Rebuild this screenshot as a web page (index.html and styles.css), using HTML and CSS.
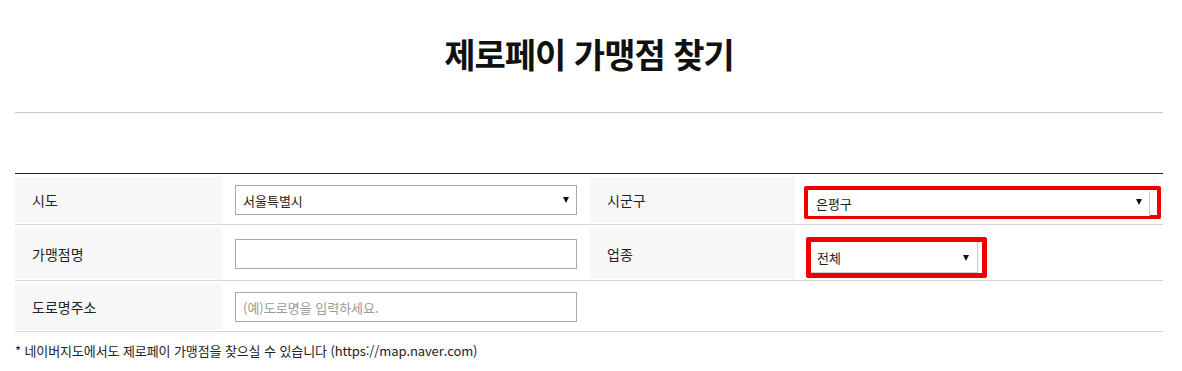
FILE: index.html
```html
<!DOCTYPE html>
<html lang="ko">
<head>
  <meta charset="UTF-8">
  <meta name="viewport" content="width=device-width, initial-scale=1.0">
  <title>제로페이 가맹점 찾기</title>
  <link rel="stylesheet" href="styles.css">
</head>
<body>
  <div class="page">
    <header class="page-head">
      <h1 class="page-title">제로페이 가맹점 찾기</h1>
    </header>

    <section class="search">
      <div class="search-row">
        <div class="search-label">시도</div>
        <div class="search-field">
          <div class="select-box select-full">
            <select class="select"><option>서울특별시</option></select>
          </div>
        </div>
        <div class="search-label">시군구</div>
        <div class="search-field">
          <div class="mark mark-gu">
            <div class="select-box select-full">
              <select class="select"><option>은평구</option></select>
            </div>
          </div>
        </div>
      </div>

      <div class="search-row search-row-tall">
        <div class="search-label">가맹점명</div>
        <div class="search-field">
          <input class="text-input" type="text">
        </div>
        <div class="search-label">업종</div>
        <div class="search-field">
          <div class="mark mark-type">
            <div class="select-box select-short">
              <select class="select"><option>전체</option></select>
            </div>
          </div>
        </div>
      </div>

      <div class="search-row">
        <div class="search-label">도로명주소</div>
        <div class="search-field">
          <input class="text-input" type="text" placeholder="(예)도로명을 입력하세요.">
        </div>
        <div class="search-empty"></div>
        <div class="search-empty"></div>
      </div>
    </section>

    <p class="search-note">* 네이버지도에서도 제로페이 가맹점을 찾으실 수 있습니다 (https://map.naver.com)</p>
  </div>
</body>
</html>
```

FILE: styles.css
```css
/* General Styles */
body {
  margin: 0;
  font-family: 'Noto Sans CJK KR', 'Noto Sans', sans-serif;
  background: #fff;
  color: #333;
}

.page {
  width: 1148px;
  margin-left: 15px;
}

/* Title */
.page-head {
  height: 113px;
  border-bottom: 1px solid #c8c8c8;
  box-sizing: border-box;
  padding-top: 33px;
  text-align: center;
}

.page-title {
  margin: 0;
  font-size: 34px;
  line-height: 42px;
  font-weight: 700;
  color: #111;
  letter-spacing: -1px;
}

/* Search table */
.search {
  margin-top: 60px;
  border-top: 1px solid #222;
}

.search-row {
  display: grid;
  grid-template-columns: 207px 368px 205px 368px;
  height: 51px;
  box-sizing: border-box;
  padding: 3px 0 1px;
  border-bottom: 1px solid #d6d6d6;
}

.search-row-tall {
  height: 56px;
}

.search-label {
  display: flex;
  align-items: center;
  padding-left: 17px;
  background: #f7f7f7;
  font-size: 14px;
  color: #222;
}

.search-field {
  display: flex;
  align-items: center;
  padding-left: 13px;
}

.search-label + .search-field + .search-label + .search-field {
  padding-left: 9px;
}

/* Inputs */
.text-input,
.select {
  box-sizing: border-box;
  height: 30px;
  border: 1px solid #aaa;
  background: #fff;
  font-family: inherit;
  font-size: 13px;
  color: #222;
  padding: 0 7px;
  margin: 0;
  outline: none;
}

.text-input {
  width: 342px;
}

.text-input::placeholder {
  color: #999;
}

.select {
  width: 100%;
  -webkit-appearance: none;
  appearance: none;
  border-radius: 0;
}

.select-box {
  position: relative;
}

.select-box::after {
  content: '';
  position: absolute;
  right: 8px;
  top: 50%;
  margin-top: -3px;
  border-left: 3px solid transparent;
  border-right: 3px solid transparent;
  border-top: 6px solid #111;
}

.select-full {
  width: 342px;
}

.select-short {
  width: 167px;
}

/* Red highlight boxes */
.mark {
  border: 4px solid #ee0000;
  border-radius: 2px;
  display: flex;
}

.mark-gu {
  height: 33px;
  box-sizing: border-box;
  padding-right: 7px;
  margin-top: 4px;
}

.mark-gu .select {
  height: 25px;
  border-color: #ccc;
  border-left: none;
  border-top: none;
  border-bottom: none;
  padding-left: 8px;
}

.mark-type {
  border-width: 5px;
  padding-right: 4px;
  align-self: flex-end;
  margin-bottom: 1px;
  margin-left: 2px;
}

.mark-type .select {
  height: 31px;
  border-color: #ccc;
  border-left: none;
  border-top: none;
  padding-left: 6px;
}

.mark-type .select-box::after {
  right: 9px;
}

/* Note */
.search-note {
  margin: 10px 0 0;
  font-size: 13px;
  line-height: 18px;
  color: #222;
  letter-spacing: -0.1px;
}
```
